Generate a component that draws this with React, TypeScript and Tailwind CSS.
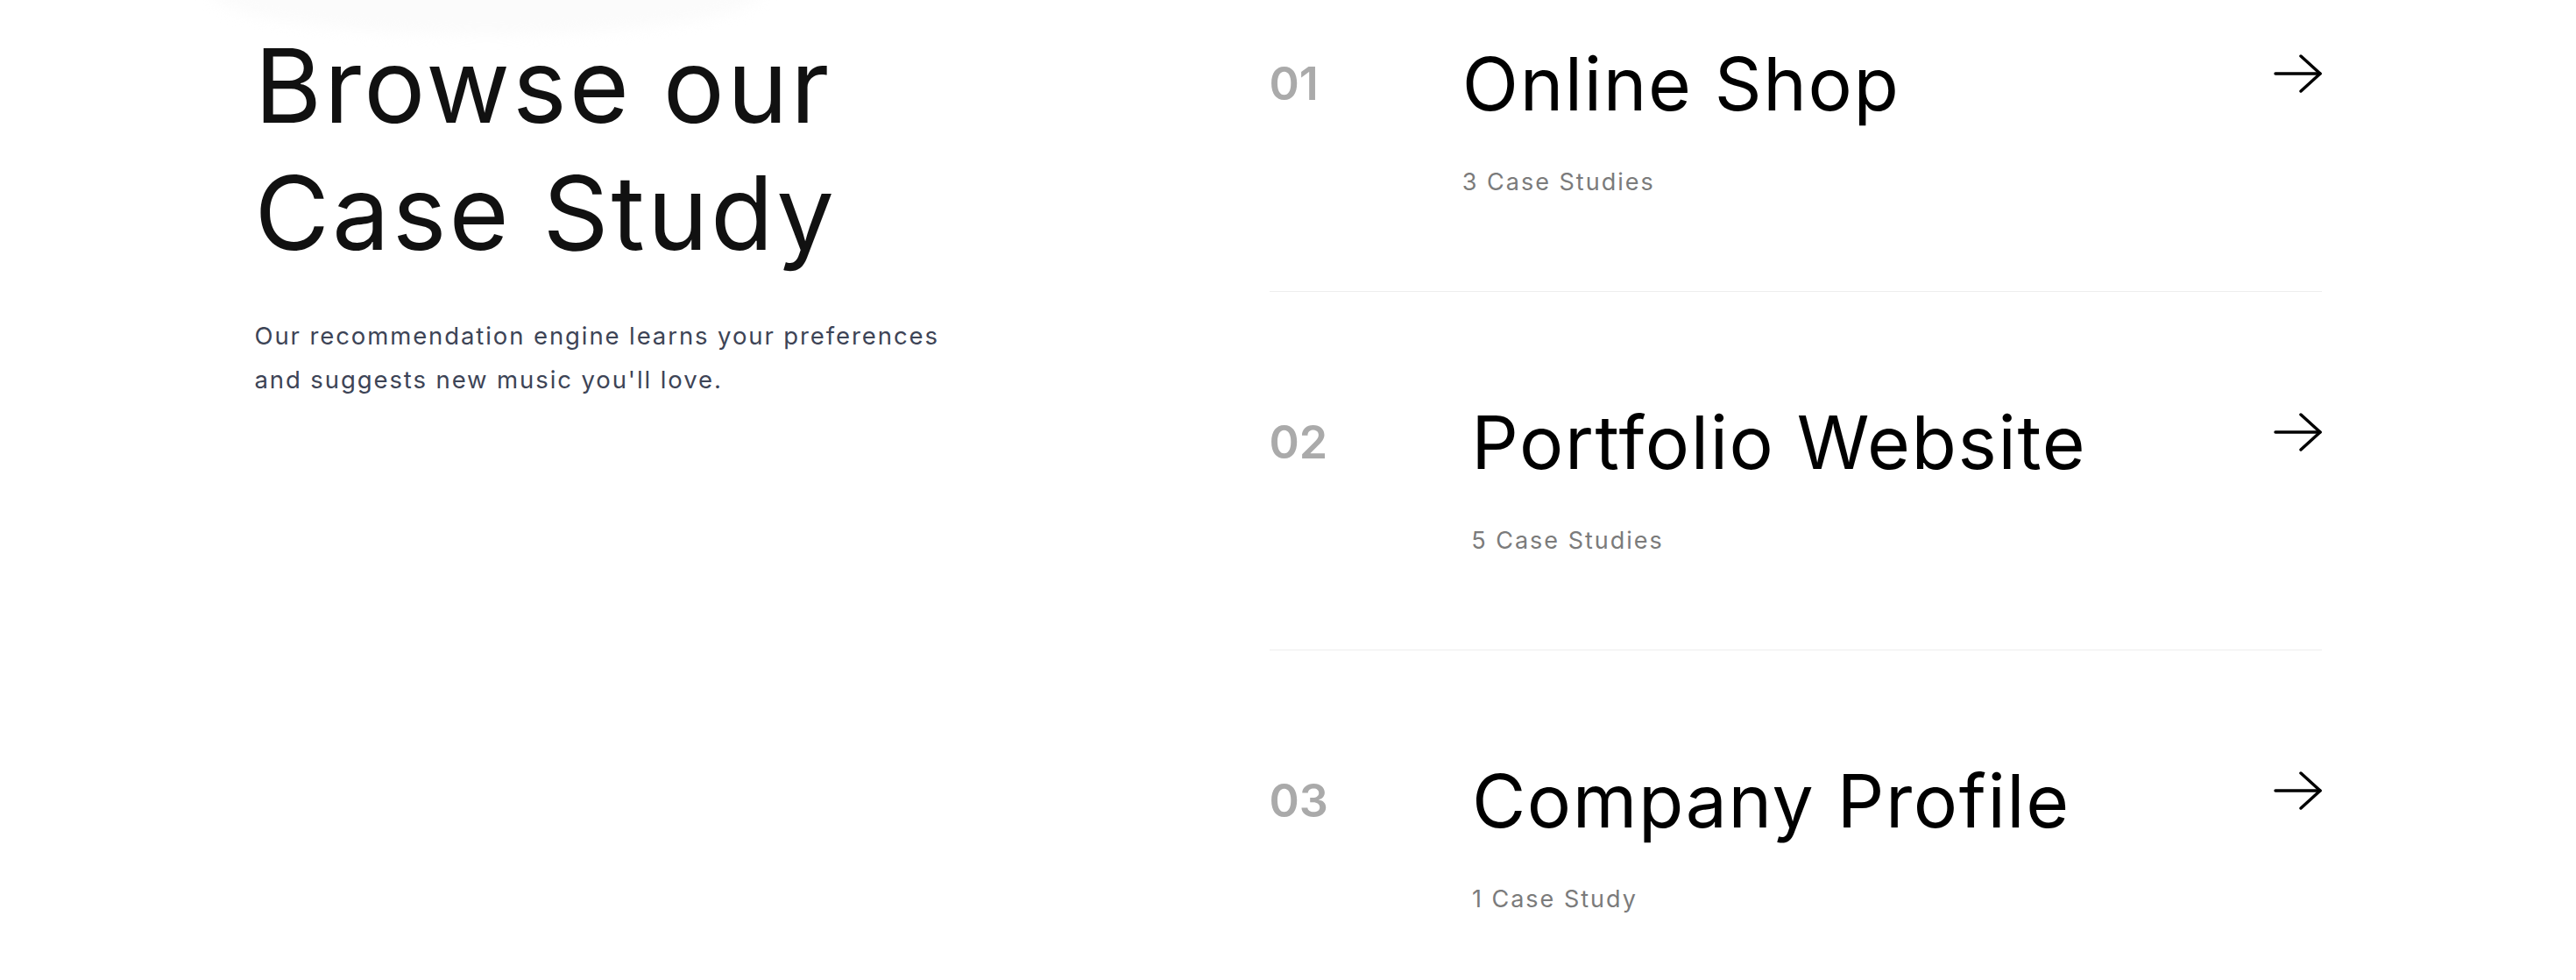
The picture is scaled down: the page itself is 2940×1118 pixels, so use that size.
import React from "react";

const CASES = [
  { no: "01", title: "Online Shop", count: "3 Case Studies" },
  { no: "02", title: "Portfolio Website", count: "5 Case Studies" },
  { no: "03", title: "Company Profile", count: "1 Case Study" },
];

const font = { fontFamily: "Inter, 'Noto Sans', sans-serif" };

const Arrow = () => (
  <svg width="56" height="44" viewBox="0 0 56 44" fill="none" className="mt-[17px] shrink-0">
    <path d="M3 22H54" stroke="#000" strokeWidth="3.5" strokeLinecap="round" />
    <path d="M32 2L54 22L32 42" stroke="#000" strokeWidth="3.5" strokeLinecap="round" strokeLinejoin="round" />
  </svg>
);

export default function App() {
  return (
    <div className="relative min-h-[1118px] w-full overflow-hidden bg-white" style={font}>
      {/* faint blob left over from the section above */}
      <div className="absolute top-[-60px] left-[240px] h-[100px] w-[630px] rounded-[50%] bg-[#fbfbfb] blur-sm" />

      <section className="relative mx-auto flex w-[2359px] pt-[25px]">
        {/* Left intro */}
        <div className="w-[1158px] shrink-0">
          <h2 className="text-[117px] leading-[145px] font-normal tracking-[3px] text-[#111]">
            Browse our
            <br />
            Case Study
          </h2>
          <p className="mt-[43px] text-[27.5px] leading-[50px] tracking-[1.9px] text-[#3d4456]">
            Our recommendation engine learns your preferences
            <br />
            and suggests new music you'll love.
          </p>
        </div>

        {/* Case list */}
        <div className="mt-[20px] flex-1">
          {CASES.map((c, i) => (
            <div
              key={c.no}
              className={
                i === 0
                  ? "flex items-start border-b border-[#eeeeee] pb-[104px]"
                  : "flex items-start border-b border-[#eeeeee] pt-[121px] pb-[104px]"
              }
            >
              <span className="mt-[25px] text-[52px] leading-[52px] font-semibold text-[#aaaaaa]">{c.no}</span>
              <div className="ml-[164px] flex-1">
                <h3 className="text-[84px] leading-[101px] font-normal tracking-[1.6px] text-black">{c.title}</h3>
                <p className="mt-[42px] text-[27px] leading-[40px] tracking-[2px] text-[#7b7b7b]">{c.count}</p>
              </div>
              <Arrow />
            </div>
          ))}
        </div>
      </section>
    </div>
  );
}
